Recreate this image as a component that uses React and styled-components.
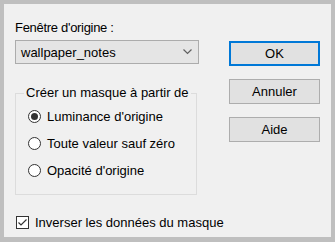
import React from "react";
import styled, { createGlobalStyle } from "styled-components";

const GlobalStyle = createGlobalStyle`
  body {
    margin: 0;
    background: #bfbfbf;
  }
`;

const Frame = styled.div`
  width: 335px;
  height: 242px;
  box-sizing: border-box;
  padding: 4px 4px 5px 4px;
  background: #bfbfbf;
`;

const Panel = styled.div`
  height: 100%;
  box-sizing: border-box;
  background: #f0f0f0;
  padding: 16px 11px 0 11px;
  display: flex;
  flex-direction: column;
  font-family: "Liberation Sans", Arial, sans-serif;
  font-size: 13px;
  color: #000;
`;

const Top = styled.div`
  display: flex;
  justify-content: space-between;
`;

const LeftCol = styled.div`
  width: 184px;
  display: flex;
  flex-direction: column;
`;

const Label = styled.div`
  height: 16px;
  line-height: 16px;
  margin-bottom: 4px;
  letter-spacing: -0.3px;
`;

const Select = styled.div`
  height: 24px;
  box-sizing: border-box;
  border: 1px solid #acacac;
  background: #e5e5e5;
  display: flex;
  align-items: center;
  justify-content: space-between;
  padding: 0 6px 0 5px;
`;

const Group = styled.fieldset`
  margin: 21px 2px 0 0;
  padding: 2px 0 0 12px;
  height: 110px;
  box-sizing: border-box;
  border: 1px solid #dcdcdc;
  border-radius: 0;
`;

const Legend = styled.legend`
  padding: 0 2px;
  margin-left: -4px;
  line-height: 16px;
`;

const Option = styled.div`
  display: flex;
  align-items: center;
  height: 27px;
  gap: 6px;
`;

const Radio = styled.span`
  width: 13px;
  height: 13px;
  box-sizing: border-box;
  border: 1px solid #333;
  border-radius: 50%;
  background: #fff;
  display: flex;
  align-items: center;
  justify-content: center;
  &::after {
    content: "";
    width: 7px;
    height: 7px;
    border-radius: 50%;
    background: ${(p) => (p.checked ? "#333" : "transparent")};
  }
`;

const Buttons = styled.div`
  width: 91px;
  display: flex;
  flex-direction: column;
  gap: 13px;
  padding-top: 21px;
`;

const Button = styled.div`
  height: 25px;
  box-sizing: border-box;
  border: ${(p) => (p.primary ? "2px solid #0078d7" : "1px solid #adadad")};
  background: #e1e1e1;
  display: flex;
  align-items: center;
  justify-content: center;
`;

const CheckRow = styled.div`
  display: flex;
  align-items: center;
  gap: 6px;
  margin-top: 20px;
  padding-left: 1px;
`;

const Box = styled.span`
  width: 13px;
  height: 13px;
  box-sizing: border-box;
  border: 1px solid #333;
  background: #fff;
  display: flex;
  align-items: center;
  justify-content: center;
`;

const Chevron = () => (
  <svg width="9" height="6" viewBox="0 0 9 6">
    <path d="M0.5 0.5 L4.5 4.5 L8.5 0.5" fill="none" stroke="#606060" strokeWidth="1.2" />
  </svg>
);

const Check = () => (
  <svg width="11" height="11" viewBox="0 0 11 11">
    <path d="M1.5 5.5 L4 8 L9.5 2.5" fill="none" stroke="#333" strokeWidth="1.2" />
  </svg>
);

export default function App() {
  return (
    <>
      <GlobalStyle />
      <Frame>
        <Panel>
          <Top>
            <LeftCol>
              <Label>Fenêtre d'origine :</Label>
              <Select>
                <span>wallpaper_notes</span>
                <Chevron />
              </Select>
              <Group>
                <Legend>Créer un masque à partir de</Legend>
                <Option>
                  <Radio checked />
                  Luminance d'origine
                </Option>
                <Option>
                  <Radio />
                  Toute valeur sauf zéro
                </Option>
                <Option>
                  <Radio />
                  Opacité d'origine
                </Option>
              </Group>
            </LeftCol>
            <Buttons>
              <Button primary>OK</Button>
              <Button>Annuler</Button>
              <Button>Aide</Button>
            </Buttons>
          </Top>
          <CheckRow>
            <Box>
              <Check />
            </Box>
            Inverser les données du masque
          </CheckRow>
        </Panel>
      </Frame>
    </>
  );
}
